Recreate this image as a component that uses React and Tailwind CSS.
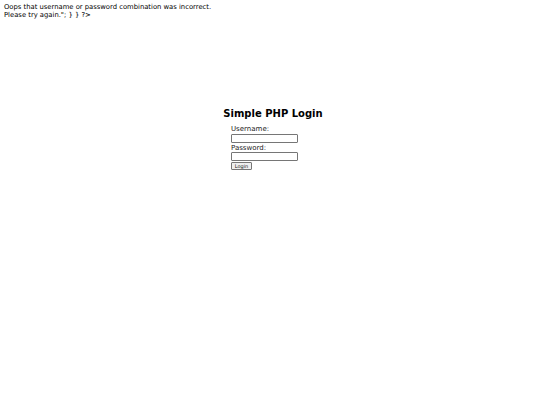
export default function App() {
  return (
    <div className="w-[540px] h-[405px] bg-white text-black" style={{ fontFamily: '"DejaVu Sans", Verdana, sans-serif' }}>
      <div className="pl-[4px] pt-[3px] text-[6.8px] leading-[8px]">
        <div>Oops that username or password combination was incorrect.</div>
        <div>Please try again.&quot;; } } ?&gt;</div>
      </div>
      <div className="ml-[221px] w-[104px] mt-[89px]">
        <h1 className="text-[10px] font-bold leading-[12px] text-center">Simple PHP Login</h1>
        <div className="ml-[10px] w-[67px] mt-[5px] flex flex-col text-[7px] leading-[8px] text-[#222]">
          <div>Username:</div>
          <div className="h-[9px] w-[67px] border border-[#767676] rounded-[1px] bg-white mt-[1px]"></div>
          <div className="mt-[1px]">Password:</div>
          <div className="h-[9px] w-[67px] border border-[#767676] rounded-[1px] bg-white"></div>
          <div className="mt-[1px] w-[21px] h-[8px] border border-[#767676] rounded-[1px] bg-[#efefef] text-[5px] leading-[6px] flex items-center justify-center">Login</div>
        </div>
      </div>
    </div>
  );
}
